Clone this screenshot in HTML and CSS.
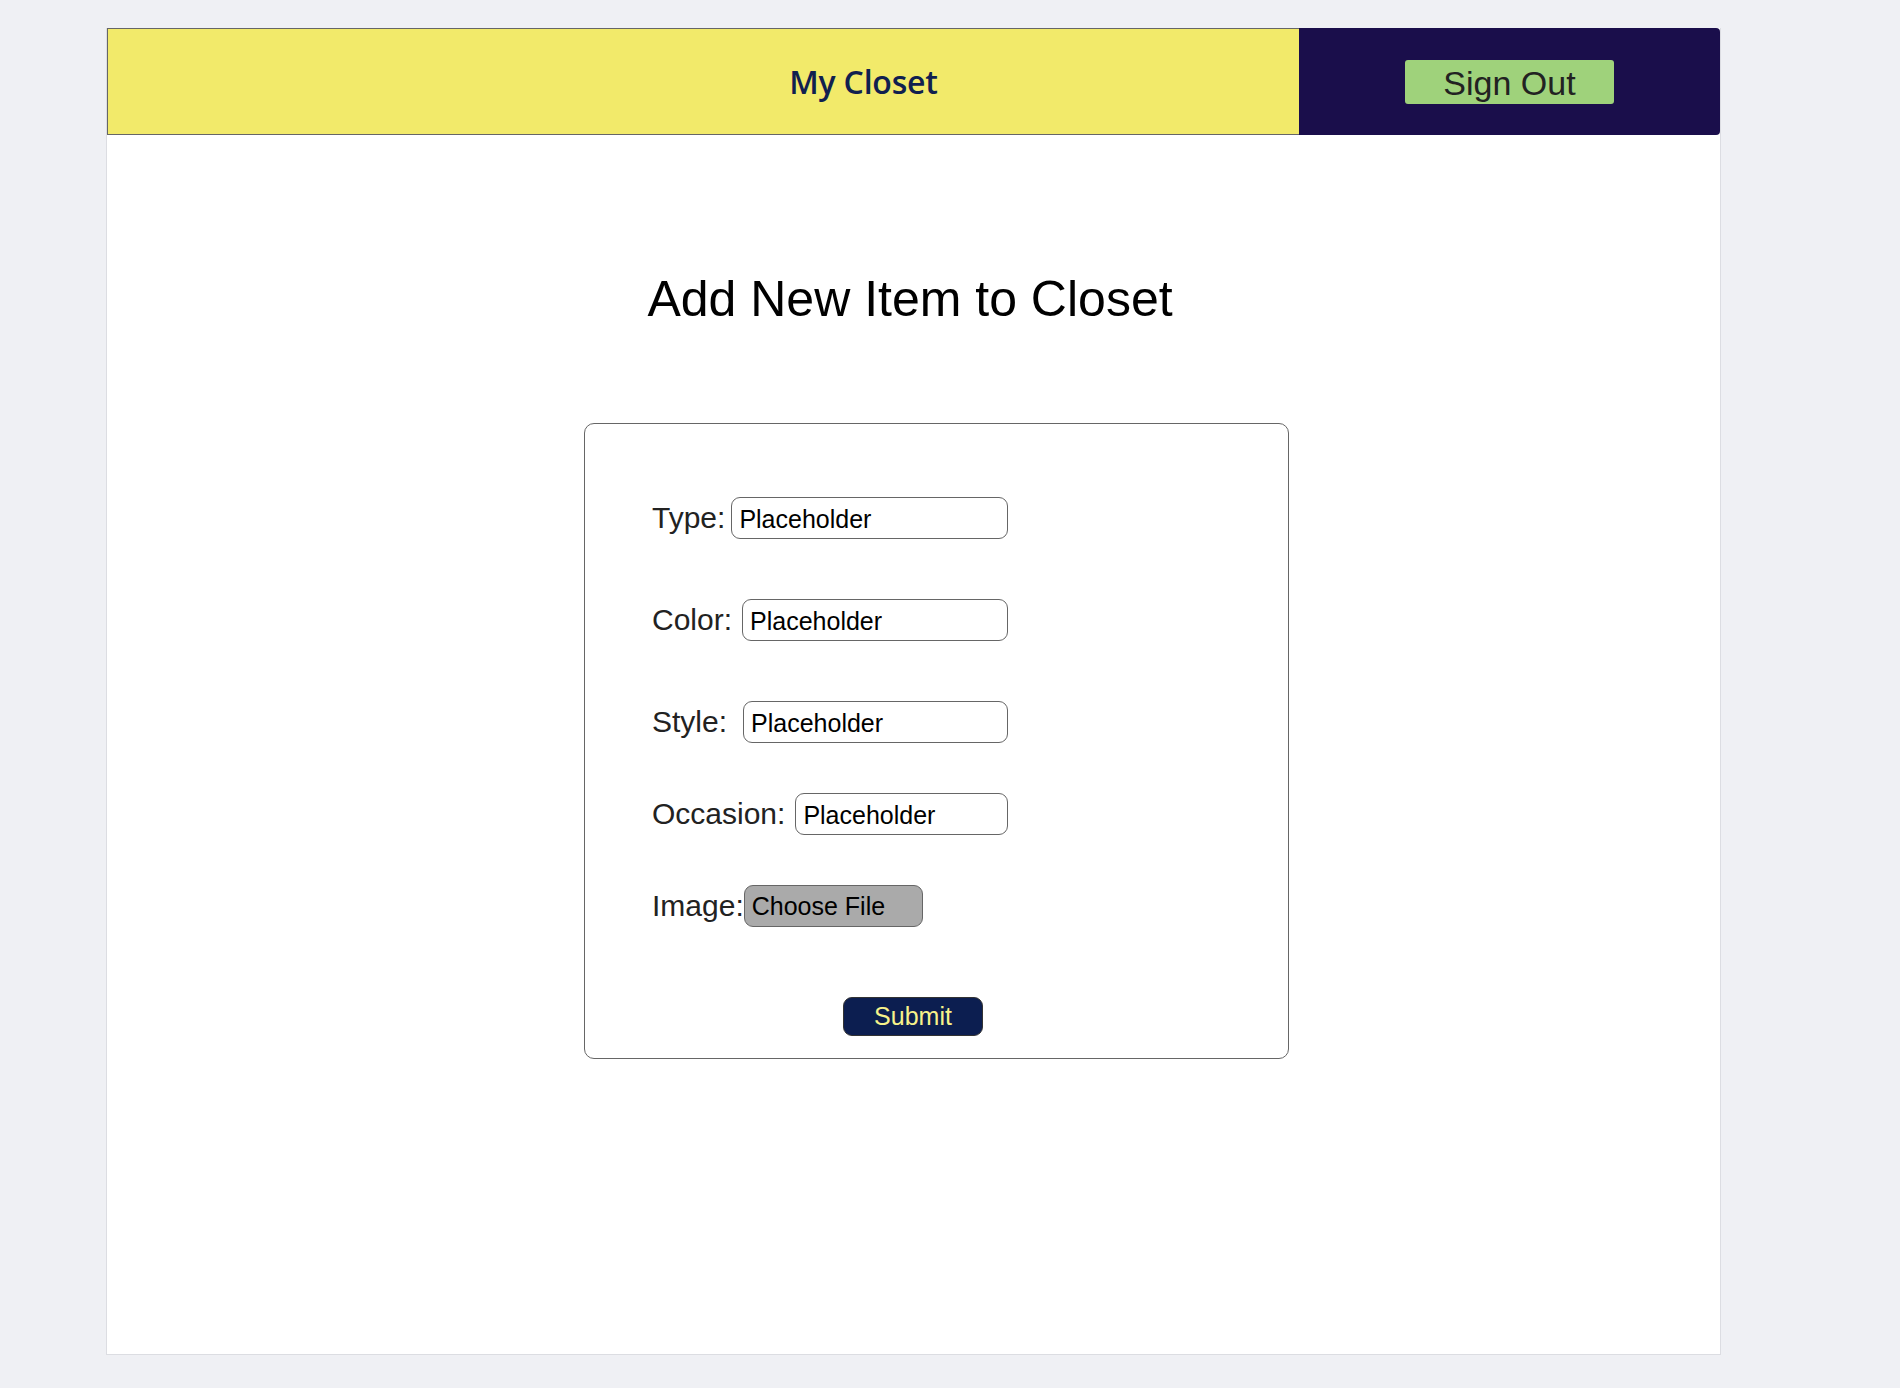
FILE: index.html
```html
<!DOCTYPE html>
<html lang="en">
<head>
<meta charset="utf-8">
<title>My Closet - Add Item</title>
<link rel="stylesheet" href="styles.css">
</head>
<body>
<div class="page">
  <header class="topbar">
    <div class="brand"><span class="brand-title">My Closet</span></div>
    <div class="account"><button class="signout" type="button">Sign Out</button></div>
  </header>
  <main class="content">
    <h1 class="heading">Add New Item to Closet</h1>
    <form class="item-form">
      <div class="row row--type">
        <label class="label" for="type">Type:</label>
        <input class="field" id="type" type="text" value="Placeholder">
      </div>
      <div class="row row--color">
        <label class="label" for="color">Color:</label>
        <input class="field" id="color" type="text" value="Placeholder">
      </div>
      <div class="row row--style">
        <label class="label" for="style">Style:</label>
        <input class="field" id="style" type="text" value="Placeholder">
      </div>
      <div class="row row--occasion">
        <label class="label" for="occasion">Occasion:</label>
        <input class="field" id="occasion" type="text" value="Placeholder">
      </div>
      <div class="row row--image">
        <span class="label">Image:</span>
        <span class="file-btn">Choose File</span>
      </div>
      <div class="submit-row">
        <button class="submit" type="button">Submit</button>
      </div>
    </form>
  </main>
</div>
</body>
</html>
```

FILE: styles.css
```css
* { box-sizing: border-box; }

html, body {
  margin: 0;
  padding: 0;
  background: #eff0f4;
}

body {
  font-family: "Liberation Sans", Arial, sans-serif;
  color: #000;
}

.page {
  margin: 28px 0 0 106px;
  width: 1615px;
  height: 1327px;
  background: #ffffff;
  border-left: 1px solid #dcdde2;
  border-right: 1px solid #dcdde2;
  border-bottom: 1px solid #dcdde2;
  box-shadow: 0 2px 0 #e2e3e8;
  display: flex;
  flex-direction: column;
}

.topbar {
  display: flex;
  height: 107px;
}

.brand {
  width: 1192px;
  background: #f2ea6a;
  border: 1px solid #666666;
  border-right: none;
  display: flex;
  align-items: center;
  justify-content: center;
  padding-left: 320px;
}

.brand-title {
  font-family: "Open Sans", "Noto Sans", sans-serif;
  font-size: 32px;
  font-weight: 600;
  color: #10204f;
  letter-spacing: -0.2px;
  margin-top: 0;
}

.account {
  flex: 1;
  background: #1a0e4b;
  border-radius: 0 4px 4px 0;
  display: flex;
  align-items: center;
  justify-content: center;
}

.signout {
  width: 209px;
  height: 44px;
  background: #9fd27b;
  border: none;
  border-radius: 3px;
  font-family: "Liberation Sans", Arial, sans-serif;
  font-size: 34px;
  color: #222222;
  padding: 2px 0 0;
  line-height: 1;
}

.content {
  display: flex;
  flex-direction: column;
}

.heading {
  margin: 135px 0 0;
  padding-right: 7px;
  font-size: 50px;
  line-height: 58px;
  font-weight: 400;
  text-align: center;
  color: #000;
}

.item-form {
  margin: 95px 0 0 477px;
  width: 705px;
  height: 636px;
  border: 1px solid #666666;
  border-radius: 10px;
  padding: 73px 0 0 67px;
  display: flex;
  flex-direction: column;
}

.row {
  display: flex;
  align-items: center;
  width: 356px;
  gap: 10px;
}

.row--type { gap: 6px; }
.row--style { gap: 16px; }
.row--image { gap: 0; }

.row + .row { margin-top: 60px; }
.row--occasion, .row--image { margin-top: 50px !important; }

.label {
  font-size: 30px;
  color: #222222;
  white-space: nowrap;
}

.field {
  flex: 1;
  height: 42px;
  min-width: 0;
  border: 1px solid #666666;
  border-radius: 9px;
  padding: 2px 0 0 7px;
  font-family: "Liberation Sans", Arial, sans-serif;
  font-size: 25px;
  color: #000;
  background: #fff;
}

.file-btn {
  width: 179px;
  height: 42px;
  background: #aaaaaa;
  border: 1px solid #666666;
  border-radius: 9px;
  padding: 6px 0 0 7px;
  font-size: 25px;
  color: #000;
}

.submit-row {
  margin-top: 70px;
  padding-left: 191px;
}

.submit {
  width: 140px;
  height: 39px;
  background: #0c1e50;
  border: 1px solid #333333;
  border-radius: 9px;
  font-family: "Liberation Sans", Arial, sans-serif;
  font-size: 25px;
  color: #f7f28a;
  padding: 0;
  line-height: 1;
}
```
